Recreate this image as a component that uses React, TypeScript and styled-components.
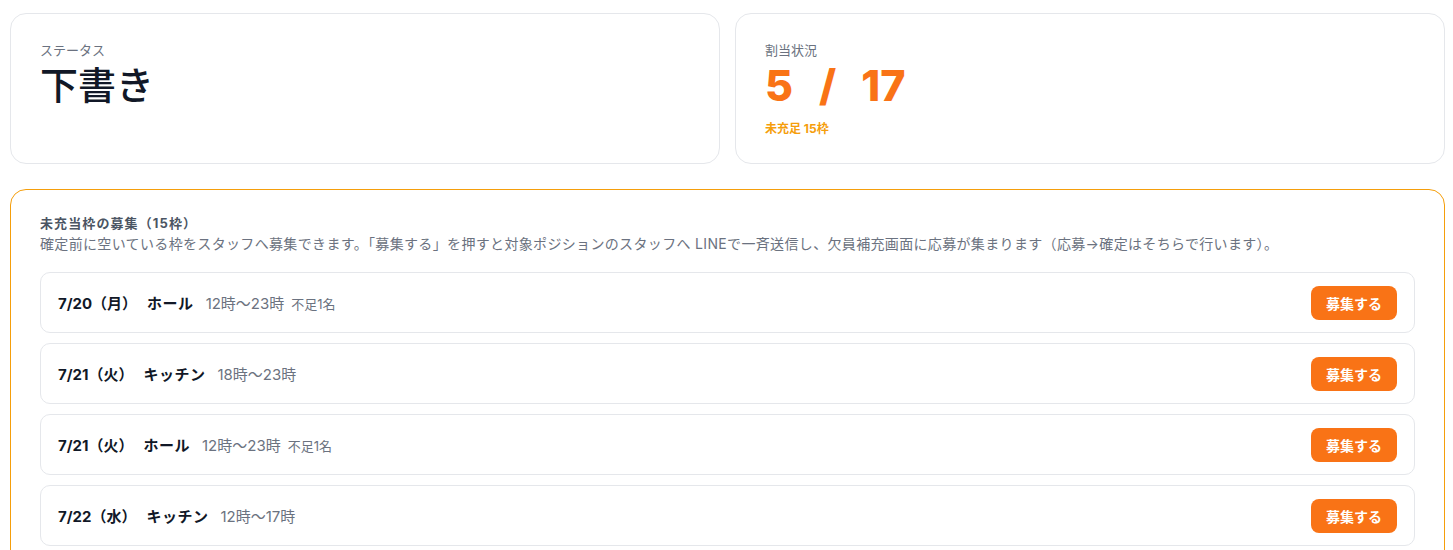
import React from "react";
import styled, { createGlobalStyle } from "styled-components";

const Global = createGlobalStyle`
  html, body { margin: 0; padding: 0; background: #fff; }
  body {
    font-family: Inter, "Noto Sans CJK JP", "Noto Sans", sans-serif;
    color: #111827;
    -webkit-font-smoothing: antialiased;
  }
  * { box-sizing: border-box; }
`;

const Page = styled.div`
  padding: 13px 8px 0 10px;
  display: flex;
  flex-direction: column;
  gap: 25px;
`;

const CardGrid = styled.div`
  display: grid;
  grid-template-columns: 1fr 1fr;
  gap: 15px;
`;

const Card = styled.div`
  border: 1px solid #e5e7eb;
  border-radius: 16px;
  background: #fff;
  padding: 27px 29px;
  height: 151px;
  display: flex;
  flex-direction: column;
`;

const Label = styled.div`
  font-size: 13px;
  line-height: 18px;
  color: #6b7280;
`;

const StatusValue = styled.div`
  font-size: 38px;
  line-height: 52px;
  font-weight: 500;
  color: #111827;
`;

const Ratio = styled.div`
  display: flex;
  align-items: baseline;
  font-size: 43px;
  line-height: 52px;
  font-weight: 800;
  color: #f97316;
`;

const Slash = styled.span`
  margin: 0 25px 0 26px;
`;

const SubNote = styled.div`
  font-size: 12px;
  line-height: 16px;
  font-weight: 700;
  color: #f59e0b;
  margin-top: 10px;
`;

const Panel = styled.section`
  border: 1px solid #f59e0b;
  border-radius: 16px;
  padding: 23px 29px 20px 29px;
  display: flex;
  flex-direction: column;
`;

const PanelTitle = styled.div`
  font-size: 13px;
  line-height: 20px;
  font-weight: 700;
  color: #4b5563;
  letter-spacing: 1.1px;
`;

const PanelDesc = styled.div`
  font-size: 14px;
  line-height: 20px;
  color: #6b7280;
  margin-top: 1px;
  letter-spacing: 0.34px;
`;

const RowList = styled.div`
  display: flex;
  flex-direction: column;
  gap: 10px;
  margin-top: 18px;
`;

const Row = styled.div`
  border: 1px solid #e5e7eb;
  border-radius: 10px;
  height: 61px;
  padding: 0 17px;
  display: flex;
  align-items: center;
  justify-content: space-between;
`;

const RowInfo = styled.div`
  display: flex;
  align-items: baseline;
`;

const DateText = styled.span`
  font-size: 15px;
  font-weight: 700;
  color: #111827;
`;

const Position = styled.span`
  font-size: 15px;
  font-weight: 700;
  color: #111827;
  margin-left: 10px;
  letter-spacing: 0.5px;
`;

const TimeText = styled.span`
  font-size: 15px;
  color: #6b7280;
  margin-left: 12px;
`;

const Shortage = styled.span`
  font-size: 13px;
  color: #6b7280;
  margin-left: 7px;
`;

const Button = styled.button`
  width: 86px;
  height: 34px;
  border: none;
  border-radius: 8px;
  background: #f97316;
  color: #fff;
  font-family: inherit;
  font-size: 14px;
  font-weight: 700;
  cursor: pointer;
`;

const rows = [
  { date: "7/20（月）", pos: "ホール", time: "12時〜23時", short: "不足1名" },
  { date: "7/21（火）", pos: "キッチン", time: "18時〜23時" },
  { date: "7/21（火）", pos: "ホール", time: "12時〜23時", short: "不足1名" },
  { date: "7/22（水）", pos: "キッチン", time: "12時〜17時" },
];

export default function App() {
  return (
    <>
      <Global />
      <Page>
        <CardGrid>
          <Card>
            <Label>ステータス</Label>
            <StatusValue>下書き</StatusValue>
          </Card>
          <Card>
            <Label>割当状況</Label>
            <Ratio>
              <span>5</span>
              <Slash>/</Slash>
              <span>17</span>
            </Ratio>
            <SubNote>未充足 15枠</SubNote>
          </Card>
        </CardGrid>
        <Panel>
          <PanelTitle>未充当枠の募集（15枠）</PanelTitle>
          <PanelDesc>
            確定前に空いている枠をスタッフへ募集できます。「募集する」を押すと対象ポジションのスタッフへ LINEで一斉送信し、欠員補充画面に応募が集まります（応募→確定はそちらで行います）。
          </PanelDesc>
          <RowList>
            {rows.map((r, i) => (
              <Row key={i}>
                <RowInfo>
                  <DateText>{r.date}</DateText>
                  <Position>{r.pos}</Position>
                  <TimeText>{r.time}</TimeText>
                  {r.short && <Shortage>{r.short}</Shortage>}
                </RowInfo>
                <Button>募集する</Button>
              </Row>
            ))}
          </RowList>
        </Panel>
      </Page>
    </>
  );
}
